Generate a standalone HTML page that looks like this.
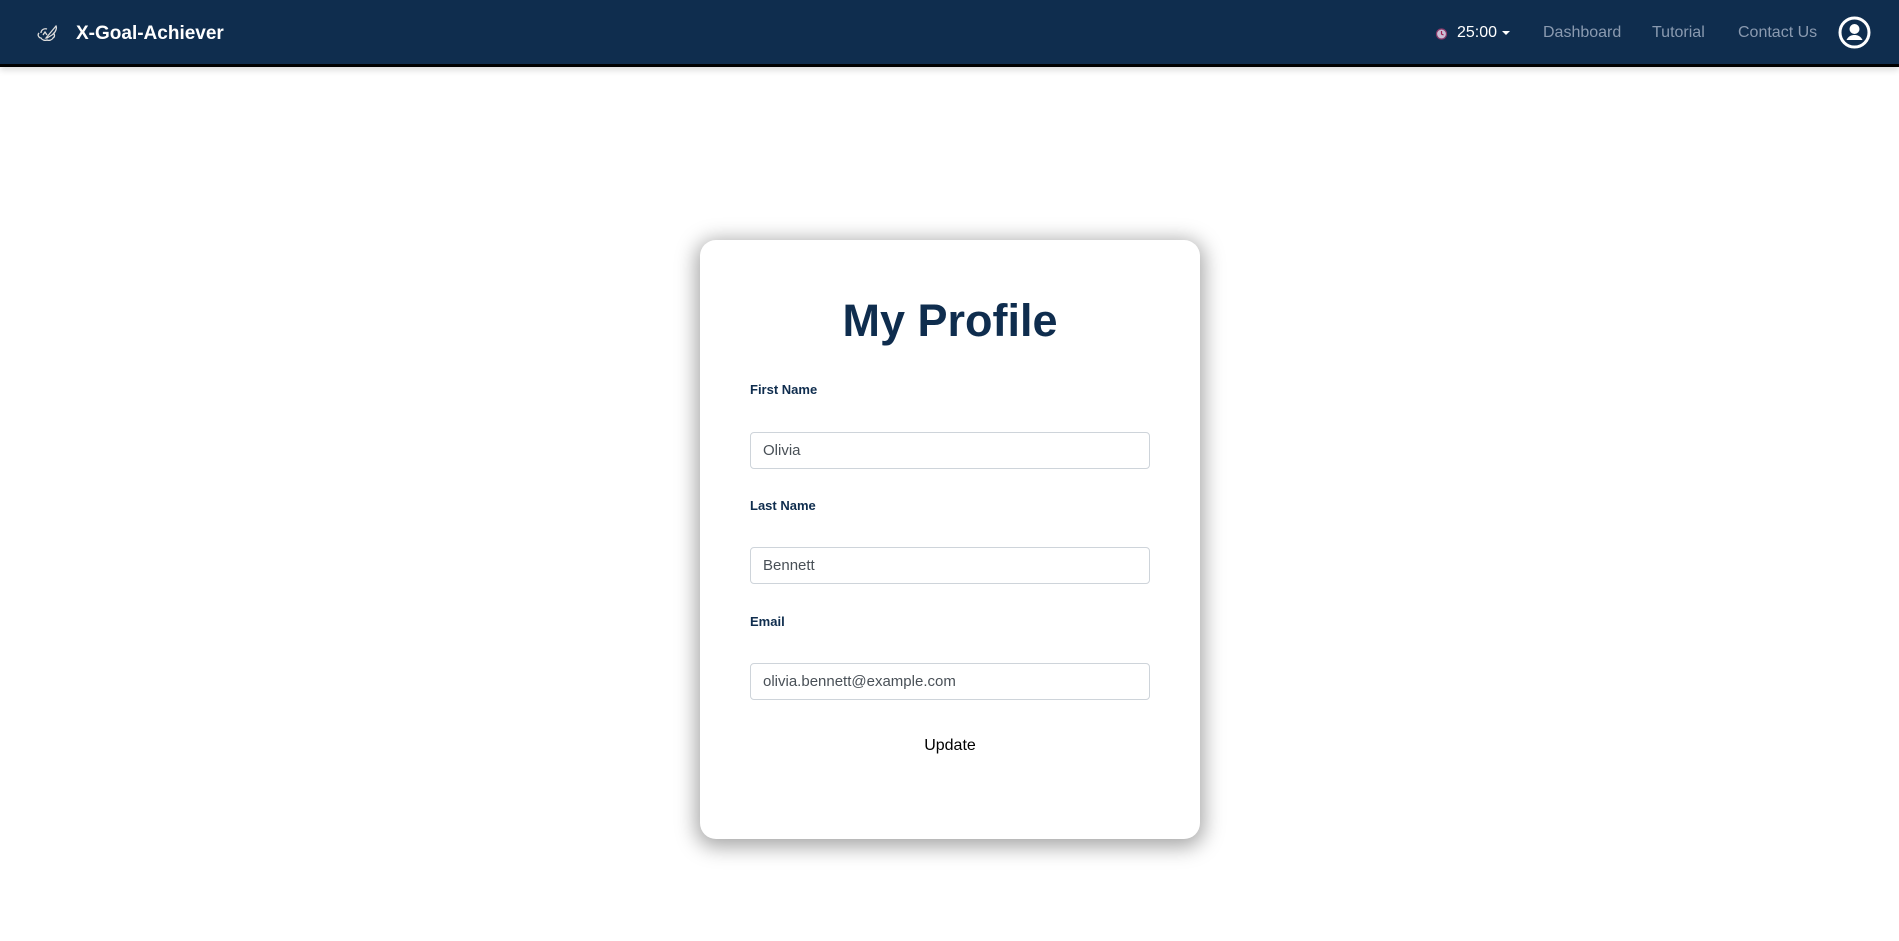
<!DOCTYPE html>
<html><head><meta charset="utf-8"><style>
*{box-sizing:border-box;margin:0;padding:0}
body{width:1899px;height:941px;background:#fff;font-family:"Liberation Sans",sans-serif;overflow:hidden;position:relative}
.nav{position:absolute;left:0;top:0;width:1899px;height:67px;background:#0f2d4e;border-bottom:3px solid #000;box-shadow:0 3px 6px rgba(0,0,0,.15)}
.brand{position:absolute;left:76px;top:23px;color:#fff;font-weight:bold;font-size:19px}
.nav a{position:absolute;top:24px;color:#8a9ab0;font-size:16px;text-decoration:none}
.card{position:absolute;left:700px;top:240px;width:500px;height:599px;background:#fff;border-radius:16px;box-shadow:0 4px 20px 4px rgba(0,0,0,.35)}
h1{position:absolute;left:0;width:500px;text-align:center;font-size:45px;color:#0f2d4e;font-weight:bold}
.lbl{position:absolute;left:50px;font-size:13px;font-weight:bold;color:#0f2d4e}
.inp{position:absolute;left:50px;width:400px;height:37px;border:1px solid #ced4da;border-radius:4px;padding:0 12px;line-height:35px;font-size:15px;color:#495057}
</style></head><body>
<div class="nav">
<svg style="position:absolute;left:36px;top:23px" width="24" height="22" viewBox="0 0 24 22" fill="none" stroke="#ddd" stroke-width="1.3"><path d="M3 10c-2 2 0 5 2 5 1 2 4 3 6 2 2 1 5 0 6-2 2-1 2-4 0-5"/><path d="M5 10c0-3 3-5 6-4"/><path d="M10 15L20 3c1 2 0 6-4 9l-5 3z"/><path d="M7 12l2-3 2 3"/></svg>
<div class="brand">X-Goal-Achiever</div>
<svg style="position:absolute;left:1435px;top:27px" width="13" height="13" viewBox="0 0 13 13"><circle cx="6.5" cy="7" r="5" fill="#c9c0d6" stroke="#8a3a6a" stroke-width="1.2"/><path d="M6.5 4v3l2 1" stroke="#a02050" stroke-width="1.2" fill="none"/></svg>
<div style="position:absolute;left:1457px;top:24px;color:#fff;font-size:16px">25:00</div>
<div style="position:absolute;left:1502px;top:31px;width:0;height:0;border-left:4px solid transparent;border-right:4px solid transparent;border-top:4px solid #fff"></div>
<a style="left:1543px">Dashboard</a>
<a style="left:1652px">Tutorial</a>
<a style="left:1738px">Contact Us</a>
<svg style="position:absolute;left:1838px;top:16px" width="33" height="33" viewBox="0 0 33 33"><circle cx="16.5" cy="16.5" r="14.5" fill="none" stroke="#fff" stroke-width="3"/><circle cx="16.5" cy="13" r="5" fill="#fff"/><path d="M8.5 24c2-4 5-5 8-5s6 1 8 5" fill="#fff"/></svg>
</div>
<div class="card">
<h1 style="top:55px">My Profile</h1>
<div class="lbl" style="top:142px">First Name</div>
<div class="inp" style="top:192px">Olivia</div>
<div class="lbl" style="top:258px">Last Name</div>
<div class="inp" style="top:307px">Bennett</div>
<div class="lbl" style="top:374px">Email</div>
<div class="inp" style="top:423px">olivia.bennett@example.com</div>
<div style="position:absolute;left:0;width:500px;top:497px;text-align:center;font-size:16px;color:#000">Update</div>
</div>
</body></html>
